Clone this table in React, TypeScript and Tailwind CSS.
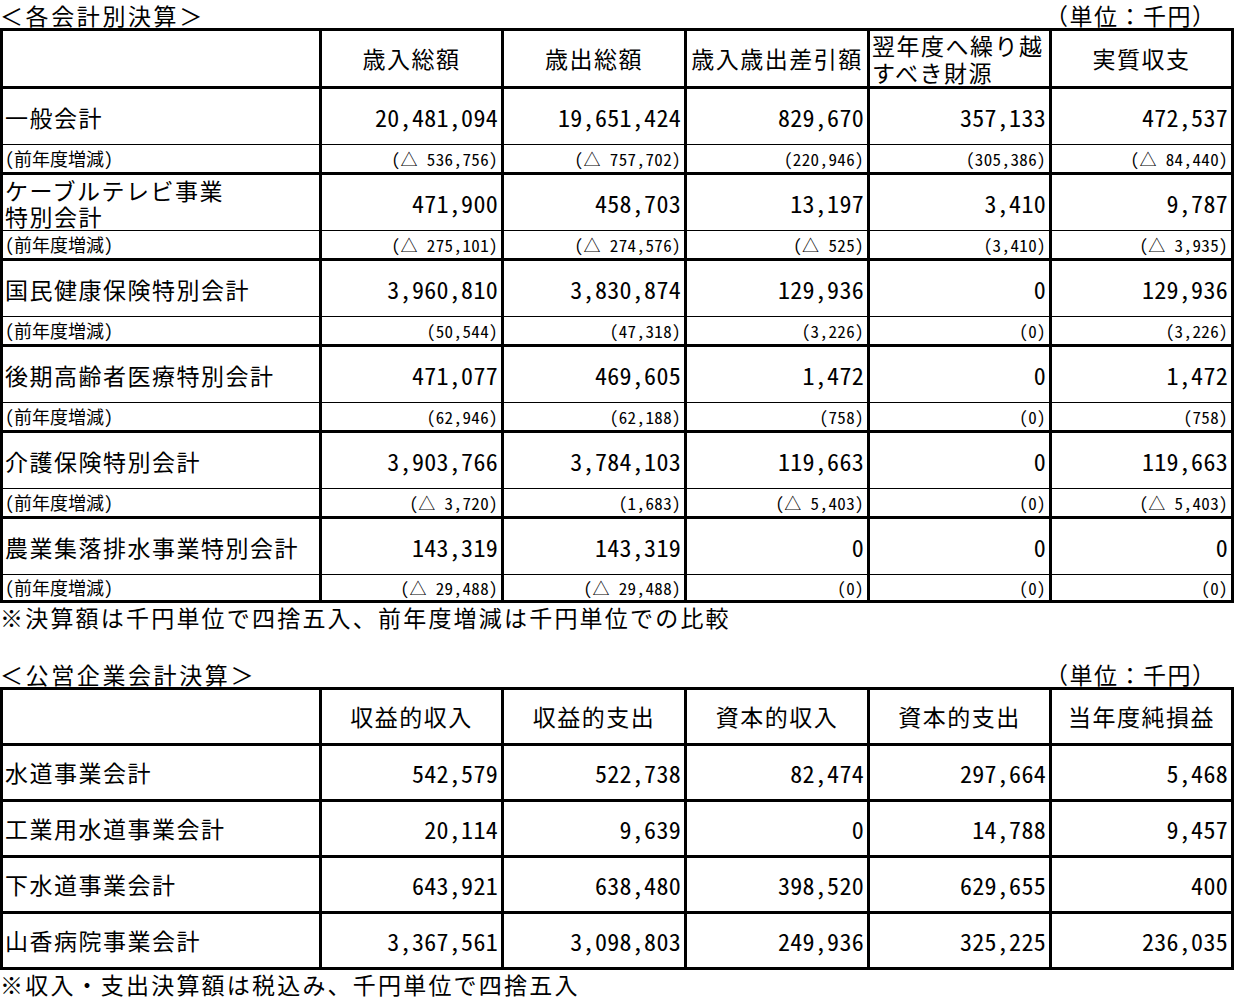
import React from "react";

type Account = {
  name: React.ReactNode;
  values: string[];
  diffs: string[];
};

const accounts: Account[] = [
  {
    name: "一般会計",
    values: ["20,481,094", "19,651,424", "829,670", "357,133", "472,537"],
    diffs: ["(△ 536,756)", "(△ 757,702)", "(220,946)", "(305,386)", "(△ 84,440)"],
  },
  {
    name: (
      <>
        ケーブルテレビ事業
        <br />
        特別会計
      </>
    ),
    values: ["471,900", "458,703", "13,197", "3,410", "9,787"],
    diffs: ["(△ 275,101)", "(△ 274,576)", "(△ 525)", "(3,410)", "(△ 3,935)"],
  },
  {
    name: "国民健康保険特別会計",
    values: ["3,960,810", "3,830,874", "129,936", "0", "129,936"],
    diffs: ["(50,544)", "(47,318)", "(3,226)", "(0)", "(3,226)"],
  },
  {
    name: "後期高齢者医療特別会計",
    values: ["471,077", "469,605", "1,472", "0", "1,472"],
    diffs: ["(62,946)", "(62,188)", "(758)", "(0)", "(758)"],
  },
  {
    name: "介護保険特別会計",
    values: ["3,903,766", "3,784,103", "119,663", "0", "119,663"],
    diffs: ["(△ 3,720)", "(1,683)", "(△ 5,403)", "(0)", "(△ 5,403)"],
  },
  {
    name: "農業集落排水事業特別会計",
    values: ["143,319", "143,319", "0", "0", "0"],
    diffs: ["(△ 29,488)", "(△ 29,488)", "(0)", "(0)", "(0)"],
  },
];

const enterprises = [
  { name: "水道事業会計", values: ["542,579", "522,738", "82,474", "297,664", "5,468"] },
  { name: "工業用水道事業会計", values: ["20,114", "9,639", "0", "14,788", "9,457"] },
  { name: "下水道事業会計", values: ["643,921", "638,480", "398,520", "629,655", "400"] },
  { name: "山香病院事業会計", values: ["3,367,561", "3,098,803", "249,936", "325,225", "236,035"] },
];

const gridCols =
  "grid grid-cols-[319px_182px_183px_183px_182px_182px] w-[1234px] border-l-[3px] border-t-[3px] border-black";

const bigText = "text-[23px] tracking-[1.5px]";
const numText = "text-[24px] tracking-[0.3px] [font-feature-settings:'hwid']";
const smallText = "text-[17px] tracking-[0.4px] [font-feature-settings:'hwid']";

function TitleRow({ title }: { title: string }) {
  return (
    <div className="flex w-[1234px] h-[28px] items-end text-[23px] leading-[26px]">
      <div className="flex-1 tracking-[2.6px]">{title}</div>
      <div className="w-[189px] tracking-[1.5px]">（単位：千円）</div>
    </div>
  );
}

function Note({ children }: { children: React.ReactNode }) {
  return <div className="h-[28px] leading-[28px] text-[23px] tracking-[2.2px]">{children}</div>;
}

function HeaderCell({ children }: { children?: React.ReactNode }) {
  return (
    <div className={`flex items-center justify-center border-r-[3px] border-b-[3px] border-black ${bigText}`}>
      {children}
    </div>
  );
}

export default function App() {
  return (
    <div className="w-[1236px] bg-white text-black font-['Noto_Sans_CJK_JP',sans-serif]">
      <TitleRow title="＜各会計別決算＞" />
      <div className={gridCols}>
        <div className="h-[58px] border-r-[3px] border-b-[3px] border-black" />
        <HeaderCell>歳入総額</HeaderCell>
        <HeaderCell>歳出総額</HeaderCell>
        <HeaderCell>歳入歳出差引額</HeaderCell>
        <div className={`flex flex-col justify-center pl-[2px] leading-[27px] border-r-[3px] border-b-[3px] border-black ${bigText}`}>
          <span>翌年度へ繰り越</span>
          <span>すべき財源</span>
        </div>
        <HeaderCell>実質収支</HeaderCell>

        {accounts.map((acc, i) => {
          const last = i === accounts.length - 1;
          const subH = last ? "h-[28px]" : "h-[30px]";
          return (
            <React.Fragment key={i}>
              <div className={`h-[56px] flex items-center pl-[2px] leading-[26px] border-r-[3px] border-b border-black ${bigText}`}>
                <div>{acc.name}</div>
              </div>
              {acc.values.map((v, j) => (
                <div key={j} className={`h-[56px] flex items-center justify-end pr-[3px] border-r-[3px] border-b border-black ${numText}`}>
                  {v}
                </div>
              ))}
              <div className={`${subH} flex items-center pl-[2px] text-[18px] border-r-[3px] border-b-[3px] border-black [font-feature-settings:'hwid']`}>
                (前年度増減)
              </div>
              {acc.diffs.map((d, j) => (
                <div key={j} className={`${subH} flex items-center justify-end pr-[3px] border-r-[3px] border-b-[3px] border-black ${smallText}`}>
                  {d}
                </div>
              ))}
            </React.Fragment>
          );
        })}
      </div>
      <Note>※決算額は千円単位で四捨五入、前年度増減は千円単位での比較</Note>
      <div className="h-[28px]" />
      <TitleRow title="＜公営企業会計決算＞" />
      <div className={gridCols}>
        <div className="h-[56px] border-r-[3px] border-b-[3px] border-black" />
        <HeaderCell>収益的収入</HeaderCell>
        <HeaderCell>収益的支出</HeaderCell>
        <HeaderCell>資本的収入</HeaderCell>
        <HeaderCell>資本的支出</HeaderCell>
        <HeaderCell>当年度純損益</HeaderCell>
        {enterprises.map((e, i) => (
          <React.Fragment key={i}>
            <div className={`h-[56px] flex items-center pl-[2px] border-r-[3px] border-b-[3px] border-black ${bigText}`}>
              {e.name}
            </div>
            {e.values.map((v, j) => (
              <div key={j} className={`h-[56px] flex items-center justify-end pr-[3px] border-r-[3px] border-b-[3px] border-black ${numText}`}>
                {v}
              </div>
            ))}
          </React.Fragment>
        ))}
      </div>
      <Note>※収入・支出決算額は税込み、千円単位で四捨五入</Note>
    </div>
  );
}
